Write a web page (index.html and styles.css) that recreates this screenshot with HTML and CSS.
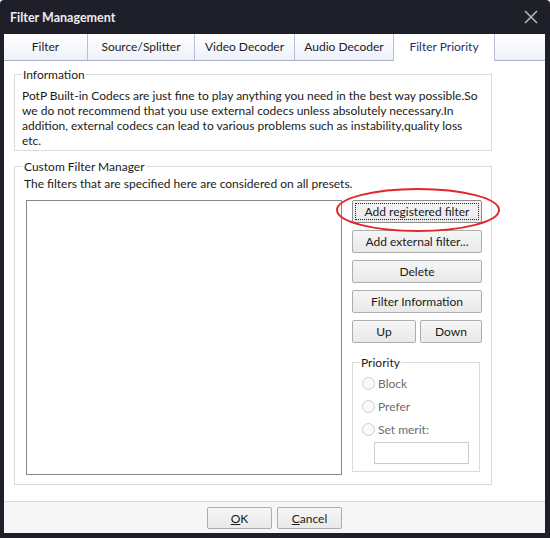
FILE: index.html
```html
<!DOCTYPE html>
<html lang="en">
<head>
    <meta charset="UTF-8">
    <meta name="viewport" content="width=device-width, initial-scale=1.0">
    <title>Filter Management</title>
    <link rel="stylesheet" href="styles.css">
</head>
<body>
    <div class="window">
        <div class="titlebar">
            <span class="title">Filter Management</span>
            <svg class="close" width="14" height="14" viewBox="0 0 14 14">
                <path d="M1 1 L13 13 M13 1 L1 13" stroke="#b4b4bc" stroke-width="1.6" fill="none"/>
            </svg>
        </div>

        <div class="client">
            <div class="tabs">
                <div class="tab tab-filter">Filter</div>
                <div class="tab tab-source">Source/Splitter</div>
                <div class="tab tab-video">Video Decoder</div>
                <div class="tab tab-audio">Audio Decoder</div>
                <div class="tab tab-priority active">Filter Priority</div>
                <div class="tab tab-rest"></div>
            </div>

            <div class="panel">
                <fieldset class="group info">
                    <legend>Information</legend>
                    <p>PotP Built-in Codecs are just fine to play anything you need in the best way possible.So<br>
                    we do not recommend that you use external codecs unless absolutely necessary.In<br>
                    addition, external codecs can lead to various problems such as instability,quality loss<br>
                    etc.</p>
                </fieldset>

                <fieldset class="group manager">
                    <legend>Custom Filter Manager</legend>
                    <p class="hint">The filters that are specified here are considered on all presets.</p>
                    <div class="manager-body">
                        <div class="listbox"></div>
                        <div class="actions">
                            <button class="btn focused"><span>Add registered filter</span></button>
                            <button class="btn">Add external filter...</button>
                            <button class="btn">Delete</button>
                            <button class="btn">Filter Information</button>
                            <div class="pair">
                                <button class="btn btn-up">Up</button>
                                <button class="btn btn-down">Down</button>
                            </div>
                            <fieldset class="group priority">
                                <legend>Priority</legend>
                                <label class="radio"><span class="dot"></span>Block</label>
                                <label class="radio"><span class="dot"></span>Prefer</label>
                                <label class="radio"><span class="dot"></span>Set merit:</label>
                                <div class="merit"></div>
                            </fieldset>
                        </div>
                    </div>
                </fieldset>
            </div>

            <div class="footer">
                <button class="btn btn-footer"><u>O</u>K</button>
                <button class="btn btn-footer"><u>C</u>ancel</button>
            </div>
        </div>

        <!-- red mark around the first button -->
        <svg class="highlight" width="170" height="50" viewBox="0 0 170 50">
            <ellipse cx="84" cy="24" rx="81" ry="21" fill="none" stroke="#e3262c" stroke-width="2"/>
        </svg>
    </div>
</body>
</html>
```

FILE: styles.css
```css
body {
    margin: 0;
    padding: 0;
    background-color: #ffffff;
    font-family: Lato, "Noto Sans", sans-serif;
    font-size: 12px;
    color: #1a1a1a;
}

.window {
    position: relative;
    width: 550px;
    height: 538px;
    background-color: #1f1f29;
    border-radius: 4px 4px 0 0;
    display: flex;
    flex-direction: column;
    box-sizing: border-box;
}

.titlebar {
    height: 34px;
    display: flex;
    align-items: center;
    justify-content: space-between;
    padding: 0 12px 0 10px;
}

.title {
    color: #ebebf0;
    font-weight: bold;
    font-size: 12.5px;
}

.close {
    display: block;
}

.client {
    margin: 0 5px 5px 4px;
    height: 499px;
    background-color: #ffffff;
    display: flex;
    flex-direction: column;
}

/* Tabs */
.tabs {
    display: flex;
    height: 26px;
    border-bottom: 1px solid #a9b1cb;
}

.tab {
    box-sizing: border-box;
    height: 26px;
    line-height: 26px;
    text-align: center;
    background: linear-gradient(#ffffff, #eef1fa);
    border-right: 1px solid #b9c0d6;
    color: #222;
}

.tab-filter { width: 84px; }
.tab-source { width: 107px; }
.tab-video { width: 100px; }
.tab-audio { width: 99px; }
.tab-priority { width: 101px; }
.tab-rest { flex: 1; border-right: none; }

.tab.active {
    background: #ffffff;
    height: 27px;
    margin-bottom: -1px;
    color: #2f2a6a;
}

/* Panel */
.panel {
    flex: 1;
    padding: 6px 0 0 10px;
}

.group {
    margin: 0;
    border: 1px solid #dcdcdc;
    min-width: 0;
    box-sizing: border-box;
}

.group legend {
    padding: 0 1px;
    line-height: 15px;
}

.info {
    width: 478px;
    padding: 6px 7px 2px 7px;
}

.info legend {
    margin-left: 0;
}

.info p {
    margin: 0;
    line-height: 15px;
    white-space: nowrap;
}

.manager {
    width: 478px;
    margin-top: 8px;
    padding: 2px 8px 9px 11px;
}

.manager legend {
    margin-left: -3px;
}

.hint {
    margin: 0 0 8px -2px;
    line-height: 16px;
}

.manager-body {
    display: flex;
    gap: 10px;
}

.listbox {
    width: 316px;
    height: 275px;
    box-sizing: border-box;
    border: 1px solid #828790;
    background: #ffffff;
}

.actions {
    width: 130px;
    display: flex;
    flex-direction: column;
    gap: 7px;
}

.btn {
    font-family: inherit;
    font-size: 12px;
    color: #1a1a1a;
    height: 23px;
    padding: 0;
    border: 1px solid #adadad;
    border-radius: 2px;
    background: linear-gradient(#f6f6f6, #e9e9e9);
    box-sizing: border-box;
}

.btn.focused {
    border-color: #8d8d8d;
    padding: 2px;
}

.btn.focused span {
    display: block;
    height: 17px;
    line-height: 15px;
    border: 1px dotted #222;
    box-sizing: border-box;
}

.pair {
    display: flex;
    justify-content: space-between;
}

.btn-up { width: 64px; }
.btn-down { width: 62px; }

.priority {
    width: 128px;
    margin-top: 5px;
    padding: 2px 8px 7px 9px;
}

.priority legend {
    margin-left: -2px;
}

.radio {
    display: flex;
    align-items: center;
    height: 23px;
    color: #6d6d6d;
}

.dot {
    width: 13px;
    height: 13px;
    box-sizing: border-box;
    border: 1px solid #cccccc;
    border-radius: 50%;
    margin-right: 3px;
    background: #fafafa;
}

.merit {
    width: 95px;
    height: 22px;
    box-sizing: border-box;
    border: 1px solid #cccccc;
    margin: 1px 0 0 12px;
}

/* Footer */
.footer {
    height: 32px;
    box-sizing: border-box;
    border-top: 1px solid #d8d8d8;
    background-color: #f6f6f6;
    display: flex;
    justify-content: center;
    gap: 5px;
    padding-top: 5px;
}

.btn-footer {
    width: 65px;
    height: 22px;
}

.highlight {
    position: absolute;
    left: 334px;
    top: 186px;
}
```
